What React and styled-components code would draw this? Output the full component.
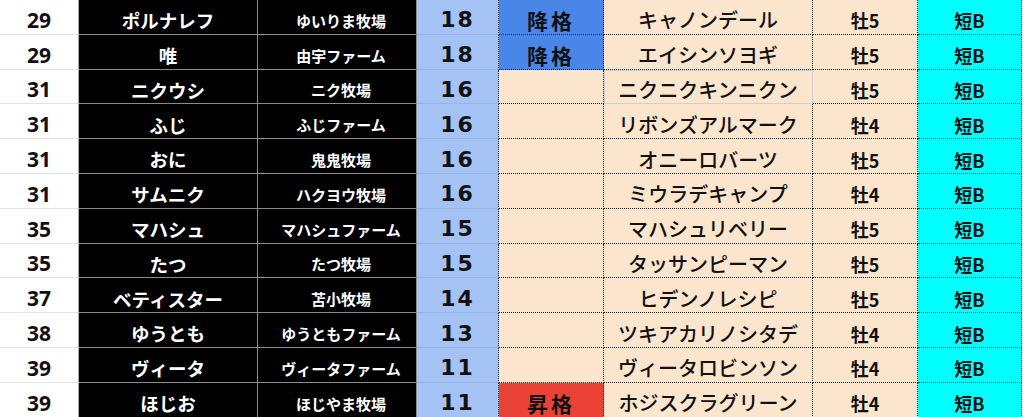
import React from 'react';
import styled, { createGlobalStyle } from 'styled-components';

const rows = [
    ['29', 'ポルナレフ', 'ゆいりま牧場', '18', 'down', 'キャノンデール', '牡5', '短B'],
    ['29', '唯', '由宇ファーム', '18', 'down', 'エイシンソヨギ', '牡5', '短B'],
    ['31', 'ニクウシ', 'ニク牧場', '16', '', 'ニクニクキンニクン', '牡5', '短B'],
    ['31', 'ふじ', 'ふじファーム', '16', '', 'リボンズアルマーク', '牡4', '短B'],
    ['31', 'おに', '鬼鬼牧場', '16', '', 'オニーロバーツ', '牡5', '短B'],
    ['31', 'サムニク', 'ハクヨウ牧場', '16', '', 'ミウラデキャンプ', '牡4', '短B'],
    ['35', 'マハシュ', 'マハシュファーム', '15', '', 'マハシュリベリー', '牡5', '短B'],
    ['35', 'たつ', 'たつ牧場', '15', '', 'タッサンピーマン', '牡5', '短B'],
    ['37', 'ベティスター', '苫小牧場', '14', '', 'ヒデンノレシピ', '牡5', '短B'],
    ['38', 'ゆうとも', 'ゆうともファーム', '13', '', 'ツキアカリノシタデ', '牡4', '短B'],
    ['39', 'ヴィータ', 'ヴィータファーム', '11', '', 'ヴィータロビンソン', '牡4', '短B'],
    ['39', 'ほじお', 'ほじやま牧場', '11', 'up', 'ホジスクラグリーン', '牡4', '短B'],
];

const statusText = { down: '降格', up: '昇格' };

function App () {
    return(
        <>
            <GlobalStyle />
            <Sheet>
                {rows.map((r, i) => (
                    <Row key={i}>
                        <RankCell>{r[0]}</RankCell>
                        <OwnerCell>{r[1]}</OwnerCell>
                        <FarmCell>{r[2]}</FarmCell>
                        <PointCell>{r[3]}</PointCell>
                        <StatusCell status={r[4]}>{statusText[r[4]]}</StatusCell>
                        <HorseCell selected={i === 2}>{r[5]}</HorseCell>
                        <SexCell>{r[6]}</SexCell>
                        <DistCell>{r[7]}</DistCell>
                    </Row>
                ))}
            </Sheet>
        </>
    )
}

export default App;

const GlobalStyle = createGlobalStyle`
 body{
     margin: 0;
     background: #fff;
     overflow: hidden;
 }
`

const Sheet = styled.div`
 width: 1024px;
 font-family: "Noto Sans CJK JP", "Noto Sans", sans-serif;
`

const Row = styled.div`
 display: grid;
 grid-template-columns: 79px 179px 159px 82px 105px 209px 105px 104px;
 height: 34.8px;
`

const Cell = styled.div`
 box-sizing: border-box;
 display: flex;
 align-items: center;
 justify-content: center;
 padding-top: 7px;
 white-space: nowrap;
 font-weight: 700;
 line-height: 1;
 color: #111;
 border-right: 1px dotted #222;
 border-bottom: 1px dotted #222;
`

const RankCell = styled(Cell)`
 background: #fff;
 font-size: 21px;
 font-family: "Noto Sans", sans-serif;
 border-right: 1px solid #a8a8a8;
 border-bottom: 1px solid #e4e4e4;
`

const OwnerCell = styled(Cell)`
 background: #000;
 color: #fff;
 font-size: 18.5px;
 border-right: 1px solid #8c8c8c;
 border-bottom: 1px solid #8c8c8c;
`

const FarmCell = styled(OwnerCell)`
 font-size: 15px;
 padding-left: 8px;
`

const PointCell = styled(Cell)`
 background: #a4c2f4;
 font-size: 22px;
 letter-spacing: 2px;
 font-family: "DejaVu Sans", sans-serif;
 border-bottom: 1px solid #97b4e4;
`

const StatusCell = styled(Cell)`
 background: ${p => p.status === 'down' ? '#4a86e8' : p.status === 'up' ? '#ea4335' : '#fce5cd'};
 font-size: 21px;
 letter-spacing: 3px;
`

const HorseCell = styled(Cell)`
 background: #fce5cd;
 font-size: 20px;
 font-weight: 500;
 overflow: visible;
 ${p => p.selected && `
     border-right: 1px solid #cfcfcf;
     border-bottom: 1px solid #cfcfcf;
     box-shadow: inset 1px 1px 0 #cfcfcf;
 `}
`

const SexCell = styled(Cell)`
 background: #fce5cd;
 font-size: 18px;
`

const DistCell = styled(Cell)`
 background: #00ffff;
 font-size: 18px;
`
